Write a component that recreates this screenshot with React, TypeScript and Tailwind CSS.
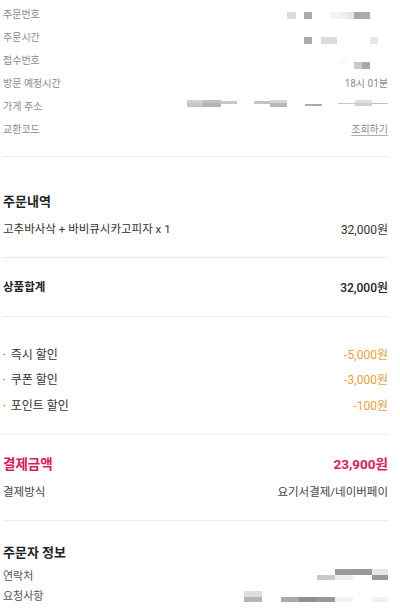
import React from "react";

type R = [number, number, number, number, string];

function Blur({ rects, h }: { rects: R[]; h: number }) {
  return (
    <svg width={210} height={h} viewBox={`0 0 210 ${h}`} className="ml-auto block shrink-0">
      {rects.map(([x, y, w, hh, c], i) => (
        <rect key={i} x={x - 178} y={y} width={w} height={hh} fill={c} />
      ))}
    </svg>
  );
}

function InfoRow({ label, children }: { label: string; children?: React.ReactNode }) {
  return (
    <div className="flex h-[23px] items-center text-[10px] text-[#8c8c8c]">
      <span>{label}</span>
      <div className="ml-auto flex items-stretch self-stretch">{children}</div>
    </div>
  );
}

const Divider = ({ cls }: { cls: string }) => <div className={`h-px bg-[#ececec] ${cls}`} />;

export default function App() {
  return (
    <div
      className="w-[400px] h-[613px] overflow-hidden bg-white pl-[3px] pr-[12px] pt-[3px]"
      style={{ fontFamily: 'Roboto, "Noto Sans CJK KR", "Noto Sans", sans-serif' }}
    >
      <InfoRow label="주문번호">
        <Blur
          h={23}
          rects={[
            [287, 9, 9, 7, "#dcdcdc"],
            [304, 9, 8, 7, "#ababab"],
            [330, 9, 8, 7, "#f5f5f5"],
            [338, 9, 9, 7, "#efefef"],
            [347, 9, 7, 7, "#e6e6e6"],
            [354, 9, 8, 7, "#a9a9a9"],
            [362, 9, 8, 7, "#acacac"],
          ]}
        />
      </InfoRow>
      <InfoRow label="주문시간">
        <Blur
          h={23}
          rects={[
            [304, 11, 8, 7, "#ababab"],
            [321, 11, 16, 7, "#dcdcdc"],
            [370, 11, 8, 7, "#e6e6e6"],
          ]}
        />
      </InfoRow>
      <InfoRow label="접수번호">
        <Blur
          h={23}
          rects={[
            [338, 10, 9, 6, "#fafafa"],
            [354, 13, 8, 7, "#cbcbcb"],
            [362, 13, 8, 7, "#a9a9a9"],
          ]}
        />
      </InfoRow>
      <InfoRow label="방문 예정시간">
        <span className="self-center">18시 01분</span>
      </InfoRow>
      <InfoRow label="가게 주소">
        <Blur
          h={23}
          rects={[
            [187, 5, 16, 3, "#d0d0d0"],
            [187, 8, 16, 4, "#c4c4c4"],
            [203, 5, 18, 3, "#c0c0c0"],
            [203, 8, 18, 4, "#b4b4b4"],
            [221, 6, 16, 3, "#c8c8c8"],
            [254, 6, 16, 3, "#c4c4c4"],
            [270, 5, 17, 3, "#d6d6d6"],
            [270, 8, 17, 4, "#b8b8b8"],
            [305, 9, 17, 2, "#ababab"],
            [338, 8, 17, 1, "#c8c8c8"],
            [355, 5, 17, 3, "#dedede"],
            [355, 8, 17, 3, "#d0d0d0"],
            [372, 8, 16, 1, "#c0c0c0"],
          ]}
        />
      </InfoRow>
      <InfoRow label="교환코드">
        <span className="self-center underline underline-offset-2 decoration-[#b0b0b0]">조회하기</span>
      </InfoRow>

      <Divider cls="mt-[15px]" />

      <div className="mt-[34px] flex h-[22px] items-center text-[13px] font-bold text-[#222]">주문내역</div>
      <div className="mt-[5px] flex h-[24px] items-center text-[11.5px] text-[#333]">
        <span>고추바사삭 + 바비큐시카고피자 x 1</span>
        <span className="ml-auto text-[12px]">32,000원</span>
      </div>

      <div className="mt-[15px] border-t border-dotted border-[#d8d8d8]" />

      <div className="mt-[18px] flex h-[24px] items-center text-[#222]">
        <span className="text-[11.5px] font-bold">상품합계</span>
        <span className="ml-auto text-[12px] font-medium">32,000원</span>
      </div>

      <Divider cls="mt-[16px]" />

      <div className="mt-[25px] flex flex-col">
        {[
          ["즉시 할인", "-5,000원"],
          ["쿠폰 할인", "-3,000원"],
          ["포인트 할인", "-100원"],
        ].map(([l, v]) => (
          <div key={l} className="flex h-[25.5px] items-center text-[12px]">
            <span className="text-[#333]">
              <span className="mr-[5px] text-[10px]">·</span>
              {l}
            </span>
            <span className="ml-auto text-[#e9a23b]">{v}</span>
          </div>
        ))}
      </div>

      <Divider cls="mt-[15px]" />

      <div className="mt-[18px] flex h-[24px] items-center text-[13.5px] font-bold text-[#e0185e]">
        <span>결제금액</span>
        <span className="ml-auto">23,900원</span>
      </div>
      <div className="mt-[4px] flex h-[24px] items-center text-[11.5px] text-[#444]">
        <span>결제방식</span>
        <span className="ml-auto">요기서결제/네이버페이</span>
      </div>

      <Divider cls="mt-[15px]" />

      <div className="mt-[21px] flex h-[22px] items-center text-[13px] font-bold text-[#222]">주문자 정보</div>
      <div className="mt-[4px] flex h-[20px] items-center text-[11px] text-[#555]">
        <span>연락처</span>
        <Blur
          h={20}
          rects={[
            [335, 1, 37, 6, "#999999"],
            [372, 1, 18, 6, "#e6e6e6"],
            [317, 7, 18, 5, "#c8c8c8"],
            [335, 7, 18, 5, "#eeeeee"],
            [372, 7, 18, 5, "#999999"],
          ]}
        />
      </div>
      <div className="flex h-[20px] items-center text-[11px] text-[#555]">
        <span>요청사항</span>
        <Blur
          h={20}
          rects={[
            [244, 3, 18, 6, "#dddddd"],
            [244, 9, 18, 5, "#b5b5b5"],
            [281, 9, 18, 5, "#aaaaaa"],
            [299, 9, 18, 5, "#8f8f8f"],
            [317, 9, 18, 5, "#999999"],
            [335, 9, 18, 5, "#f2f2f2"],
            [372, 9, 18, 5, "#f0f0f0"],
          ]}
        />
      </div>
    </div>
  );
}
